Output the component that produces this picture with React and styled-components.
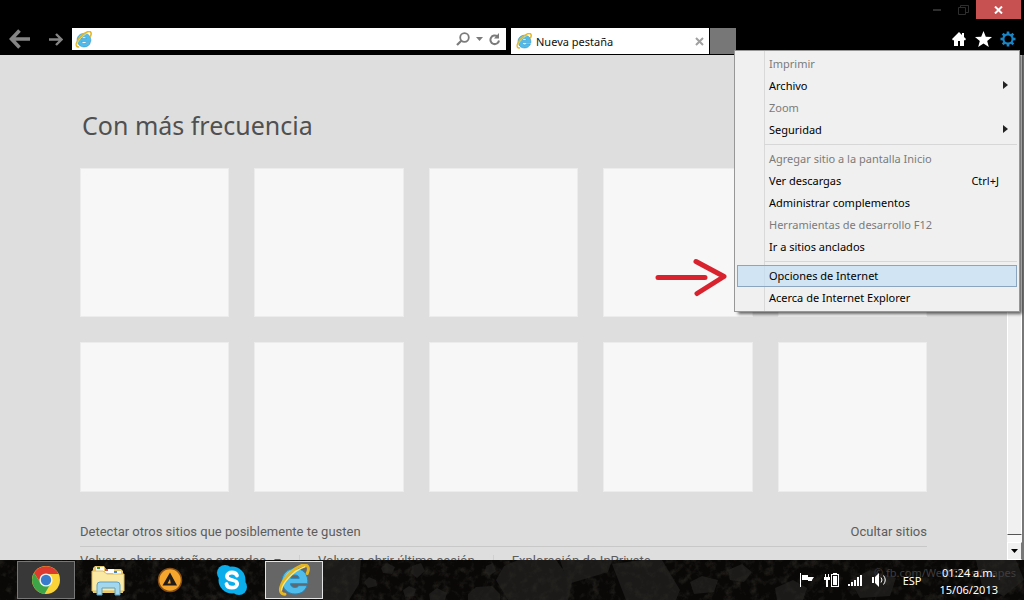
import React from 'react';
import styled, { createGlobalStyle } from 'styled-components';

const GlobalStyle = createGlobalStyle`
  * {
    box-sizing: border-box;
  }

  body {
    margin: 0;
    background: #000;
    font-family: 'Noto Sans', 'Open Sans', sans-serif;
    font-size: 11px;
  }

  button {
    padding: 0;
    border: 0;
    background: none;
    font: inherit;
    color: inherit;
  }

  svg {
    display: block;
  }
`;

const Desktop = styled.div`
  position: relative;
  display: flex;
  flex-direction: column;
  height: 100vh;
  overflow: hidden;
`;

const TitleBar = styled.header`
  display: flex;
  flex: none;
  justify-content: flex-end;
  height: 28px;
  padding-right: 3px;
`;

const WindowButton = styled.button`
  display: flex;
  align-items: center;
  justify-content: center;
  width: ${props => (props.$close ? '45px' : '26px')};
  height: 19px;
  background: ${props => (props.$close ? '#c75050' : 'transparent')};
  color: ${props => (props.$close ? '#fff' : '#2e2e2e')};
`;

const Toolbar = styled.div`
  display: grid;
  flex: none;
  grid-template-columns: 72px minmax(0, 434px) minmax(0, 1fr) auto;
  height: 27px;
`;

const NavButtons = styled.nav`
  display: flex;
  align-items: center;
  justify-content: space-between;
  height: 22px;
  padding: 0 9px;
  color: #858585;
`;

const AddressBar = styled.form`
  display: flex;
  align-items: center;
  gap: 6px;
  height: 22px;
  padding: 0 5px 0 3px;
  background: #fff;
  color: #7b7b7b;

  input {
    flex: 1;
    min-width: 0;
    border: 0;
    outline: 0;
    font: inherit;
  }
`;

const Tabs = styled.div`
  display: flex;
  gap: 1px;
  padding-left: 5px;
  height: 26px;
`;

const Tab = styled.div`
  display: flex;
  align-items: center;
  gap: 4px;
  flex: 0 1 198px;
  min-width: 0;
  padding: 0 5px;
  background: #fff;
  color: #111;

  span {
    flex: 1;
    white-space: nowrap;
  }
`;

const NewTab = styled.button`
  flex: 0 0 26px;
  background: #777;
`;

const Tools = styled.div`
  display: flex;
  align-items: center;
  gap: 8px;
  height: 22px;
  padding-right: 8px;
`;

const Viewport = styled.div`
  display: flex;
  flex: 1;
  min-height: 0;
  background: #dedede;
`;

const Page = styled.main`
  flex: 1;
  min-width: 0;
  padding: 52px 80px 0;
  overflow: hidden;
  color: #505050;
`;

const PageInner = styled.div`
  max-width: 847px;
`;

const Heading = styled.h1`
  margin: 0 0 25px 2px;
  font-size: 25px;
  font-weight: 400;
  line-height: 36px;
`;

const TileGrid = styled.div`
  display: grid;
  grid-template-columns: repeat(5, 1fr);
  gap: 25px;
`;

const Tile = styled.a`
  aspect-ratio: 1;
  border: 1px solid #ececec;
  background: #f7f7f7;
`;

const LinkRow = styled.div`
  display: flex;
  align-items: center;
  justify-content: ${props => (props.$spread ? 'space-between' : 'flex-start')};
  gap: 18px;
  padding-top: ${props => (props.$spread ? '30px' : '4px')};
  border-top: ${props => (props.$spread ? '0' : '1px solid #c8c8c8')};
  margin-bottom: 4px;
  white-space: nowrap;
`;

const PageLink = styled.a`
  display: flex;
  align-items: center;
  gap: 8px;
  color: #5c5c5c;
  font-family: Roboto, 'Noto Sans', sans-serif;
  font-size: 13px;
  line-height: 20px;
  text-decoration: none;
`;

const Divider = styled.span`
  width: 1px;
  height: 12px;
  background: #cfcfcf;
`;

const ScrollBar = styled.div`
  display: flex;
  flex-direction: column;
  flex: none;
  gap: 7px;
  width: 17px;
  border-right: 2px solid #777;
  background: #f8f8f8;
`;

const ScrollThumb = styled.div`
  flex: 1;
  border: 1px solid #fff;
  border-bottom-color: #555;
  background: #f0f0f0;
`;

const ScrollButton = styled.button`
  display: flex;
  align-items: center;
  justify-content: center;
  height: 18px;
  border: 1px solid #fff;
  border-right-color: #777;
  background: #f0f0f0;
`;

const Menu = styled.div`
  position: absolute;
  top: 50px;
  right: 4px;
  width: 286px;
  padding: 2px;
  border: 1px solid #979797;
  background: linear-gradient(90deg, #f0f0f0 29px, #d9d9d9 29px, #d9d9d9 30px, #f0f0f0 30px);
  box-shadow: 3px 3px 3px -1px rgba(0, 0, 0, 0.6);
`;

const MenuItem = styled.button`
  display: flex;
  align-items: center;
  justify-content: space-between;
  width: 100%;
  height: 22px;
  padding: 0 8px 2px 31px;
  border: 1px solid ${props => (props.$active ? '#8ba5bf' : 'transparent')};
  background: ${props => (props.$active ? 'rgba(190, 221, 245, 0.65)' : 'transparent')};
  color: #000;
  text-align: left;
  white-space: nowrap;

  &:disabled {
    color: #7b7b7b;
  }

  kbd {
    padding-right: 9px;
    font: inherit;
  }
`;

const MenuSeparator = styled.hr`
  height: 1px;
  margin: 3px 0 3px 27px;
  border: 0;
  background: #d7d7d7;
`;

const Pointer = styled.svg`
  position: absolute;
  top: 258px;
  right: 296px;
`;

const TaskBar = styled.footer`
  position: relative;
  display: flex;
  flex: none;
  align-items: center;
  justify-content: space-between;
  height: 40px;
  padding: 0 26px 0 17px;
  overflow: hidden;
  background: #0a0807;
  color: #fff;
`;

const Wallpaper = styled.svg`
  position: absolute;
  inset: 0;
  width: 100%;
  height: 100%;
`;

const TaskList = styled.div`
  position: relative;
  display: flex;
  gap: 4px;
`;

const Task = styled.button`
  display: flex;
  align-items: center;
  justify-content: center;
  width: 58px;
  height: 38px;
  border: 1px solid
    ${props => ({ active: '#e4e4e4', open: '#777' }[props.$state] || 'transparent')};
  background: ${props =>
    ({ active: '#666', open: '#383838' }[props.$state] || 'transparent')};
`;

const Tray = styled.div`
  position: relative;
  display: flex;
  align-items: center;
  gap: 8px;
`;

const Language = styled.span`
  margin-left: 7px;
`;

const Clock = styled.time`
  margin-left: 10px;
  padding-top: 2px;
  line-height: 17px;
  text-align: center;
`;

const Watermark = styled.span`
  position: absolute;
  right: 8px;
  top: 4px;
  color: #3e3e3e;
  line-height: 18px;
`;

const ExplorerLogo = ({ size }) => (
  <svg width={size} height={size} viewBox="0 0 32 32" fill="none">
    <path
      d="M17 4.500C9.500 4.500 4 9.800 4 17S9.500 30 17 30c6 0 10.400-3 12-8.400h-8.200c-.7 1.300-2 1.900-3.800 1.900-2.600 0-4.200-1.300-4.500-3.800h17.300C30.500 10.500 25.500 4.500 17 4.500zm-4.300 9.800c.5-2.100 2-3.300 4.300-3.300s3.900 1.200 4.200 3.300z"
      fill="#4fbcec"
      stroke="#2387bd"
      strokeWidth="1"
    />
    <path d="M8 12c2-3.500 6-5.500 10-5" stroke="#a8e2fa" strokeWidth="1.500" />
    <path
      d="M7 30.200C-1.500 30 3 18 11 10S28-1.500 30 3c.8 1.800.4 4-.8 6.500"
      stroke="#e3b626"
      strokeWidth="3"
      strokeLinecap="round"
    />
    <path d="M3.500 26.500C4 20 14 7 27.500 2.500" stroke="#ffe570" strokeWidth="1.400" />
  </svg>
);

const ChromeLogo = () => (
  <svg width="30" height="30" viewBox="0 0 30 30">
    <circle cx="15" cy="15" r="14" fill="#f9d338" />
    <path d="M3 8A14 14 0 0 1 27.600 9H15a6.200 6.200 0 0 0-6 8z" fill="#dd3b32" />
    <path d="M3 8a14 14 0 0 0 10.500 21l6.200-10.500A6.200 6.200 0 0 1 9.500 18z" fill="#3da547" />
    <circle cx="15" cy="15" r="6.600" fill="#f3f3f3" />
    <circle cx="15" cy="15" r="5.200" fill="#397ccb" />
  </svg>
);

const FolderLogo = () => (
  <svg width="34" height="32" viewBox="0 0 34 32">
    <path d="M2 4l2-2h9l2 3h15l2 2v22H2z" fill="#e8c868" />
    <path d="M5 3h8v4H5z" fill="#fff" />
    <path d="M6 3h3v2H6z" fill="#3aa545" />
    <path d="M14 5h9v4h-9z" fill="#fff" />
    <path d="M14 5h3v2h-3z" fill="#dc5040" />
    <path d="M22 7h8v4h-8z" fill="#fff" />
    <path d="M23 7h3v2h-3z" fill="#4587ca" />
    <path d="M1 7h11l4 3h17v17H1z" fill="#f9e9a4" stroke="#ddbd63" />
    <path
      d="M6 31V21q0-3 3-3h17q3 0 3 3v10h-5v-7H11v7z"
      fill="#a3d7ee"
      stroke="#5c9ec4"
    />
  </svg>
);

const AimpLogo = () => (
  <svg width="26" height="26" viewBox="0 0 26 26">
    <circle cx="13" cy="13" r="11.500" fill="#f6a52d" stroke="#865018" strokeWidth="1.500" />
    <path
      d="M13 5.500l7 13H5.500zM13 12l-2.500 4.500h3.200z"
      fill="#231c16"
      fillRule="evenodd"
    />
  </svg>
);

const SkypeLogo = () => (
  <svg width="32" height="32" viewBox="0 0 32 32">
    <circle cx="16" cy="16" r="13.500" fill="#0badea" />
    <circle cx="9" cy="9" r="8" fill="#0badea" />
    <circle cx="23" cy="23" r="8" fill="#0badea" />
    <path
      d="M21 11.500c-.8-2-2.500-3-5-3-2.800 0-5 1.300-5 3.700 0 5.300 10.200 2.300 10.200 7.500 0 2.500-2.200 4-5.200 4-2.900 0-5-1.400-5.500-3.700"
      fill="none"
      stroke="#fff"
      strokeWidth="3.800"
      strokeLinecap="round"
    />
  </svg>
);

const GearIcon = () => (
  <svg width="16" height="16" viewBox="0 0 16 16" fill="none" stroke="#1a84c4">
    <circle cx="8" cy="8" r="4.600" strokeWidth="2.200" />
    {[0, 45, 90, 135, 180, 225, 270, 315].map(angle => (
      <path key={angle} d="M8 3V.5" strokeWidth="2.600" transform={`rotate(${angle} 8 8)`} />
    ))}
  </svg>
);

const CaretDown = ({ color = 'currentColor' }) => (
  <svg width="7" height="4" viewBox="0 0 7 4">
    <path d="M0 0h7L3.500 4z" fill={color} />
  </svg>
);

const menuItems = [
  { label: 'Imprimir', disabled: true },
  { label: 'Archivo', submenu: true },
  { label: 'Zoom', disabled: true },
  { label: 'Seguridad', submenu: true },
  null,
  { label: 'Agregar sitio a la pantalla Inicio', disabled: true },
  { label: 'Ver descargas', shortcut: 'Ctrl+J' },
  { label: 'Administrar complementos' },
  { label: 'Herramientas de desarrollo F12', disabled: true },
  { label: 'Ir a sitios anclados' },
  null,
  { label: 'Opciones de Internet', active: true },
  { label: 'Acerca de Internet Explorer' }
];

const tasks = [
  { name: 'Google Chrome', state: 'open', icon: <ChromeLogo /> },
  { name: 'Explorador de archivos', icon: <FolderLogo /> },
  { name: 'AIMP', icon: <AimpLogo /> },
  { name: 'Skype', icon: <SkypeLogo /> },
  { name: 'Internet Explorer', state: 'active', icon: <ExplorerLogo size={32} /> }
];

const stones = [
  'M323 0h38l-2 24-10 16h-26z',
  'M364 22l5-5 7 3 1 6-9 2z',
  'M381 8l6-5 8 4-3 7-9-1z',
  'M403 30l6-4 7 3-2 7-9 1z',
  'M412 6l9-3 4 8-8 7-6-5z',
  'M429 34l8-6 10 5-2 7h-15z',
  'M468 34l8-7 16-1 8 8v6h-32z',
  'M486 6l7-3 3 8-7 5-4-4z',
  'M496 20l8-14 14-6h38l16 22-4 18h-60z',
  'M560 0h52l-4 12-40 12z',
  'M612 4l30-4h20l18 30-4 10h-50z',
  'M690 22l12-6 16 4-4 12-20 2z',
  'M728 10l14-6 10 8-8 10-14-2z',
  'M775 28l18-8 14 8-4 12h-26z',
  'M850 20l20-10 26 8-6 18-30 2z',
  'M976 0h40l8 20-20 16-22-10z'
];

const ToolsMenu = () => (
  <Menu role="menu">
    {menuItems.map((item, index) =>
      item ? (
        <MenuItem
          key={item.label}
          role="menuitem"
          disabled={item.disabled}
          $active={item.active}
        >
          {item.label}
          {item.shortcut && <kbd>{item.shortcut}</kbd>}
          {item.submenu && (
            <svg width="5" height="8" viewBox="0 0 5 8">
              <path d="M0 0l5 4-5 4z" fill="#222" />
            </svg>
          )}
        </MenuItem>
      ) : (
        <MenuSeparator key={index} />
      )
    )}
  </Menu>
);

const BrowserBar = () => (
  <>
    <TitleBar>
      <WindowButton aria-label="Minimizar">
        <svg width="8" height="2" viewBox="0 0 8 2">
          <path d="M0 0h8v2H0z" fill="currentColor" />
        </svg>
      </WindowButton>
      <WindowButton aria-label="Restaurar">
        <svg width="11" height="10" viewBox="0 0 11 10" fill="none" stroke="currentColor">
          <path d="M.5 2.500h7v7h-7zM2.500 2.500v-2h8v7h-3" />
        </svg>
      </WindowButton>
      <WindowButton $close aria-label="Cerrar">
        <svg width="9" height="8" viewBox="0 0 9 8" stroke="currentColor" strokeWidth="2">
          <path d="M1 .5l7 7M8 .5l-7 7" />
        </svg>
      </WindowButton>
    </TitleBar>
    <Toolbar>
      <NavButtons>
        <button aria-label="Atrás">
          <svg width="22" height="20" viewBox="0 0 22 20" fill="none" stroke="currentColor">
            <path d="M21 10H3M10.500 1.500L2.500 10l8 8.500" strokeWidth="3.600" />
          </svg>
        </button>
        <button aria-label="Adelante">
          <svg width="14" height="13" viewBox="0 0 14 13" fill="none" stroke="currentColor">
            <path d="M0 6.500h12M7 1l5.500 5.500L7 12" strokeWidth="2.400" />
          </svg>
        </button>
      </NavButtons>
      <AddressBar>
        <ExplorerLogo size={17} />
        <input type="text" aria-label="Dirección" />
        <button type="button" aria-label="Buscar">
          <svg width="14" height="14" viewBox="0 0 14 14" fill="none" stroke="currentColor">
            <circle cx="8.500" cy="5.500" r="4.300" strokeWidth="1.800" />
            <path d="M5.300 8.700L1 13" strokeWidth="2.200" />
          </svg>
        </button>
        <button type="button" aria-label="Autocompletar">
          <CaretDown />
        </button>
        <button type="button" aria-label="Actualizar">
          <svg width="12" height="13" viewBox="0 0 12 13" fill="none" stroke="currentColor">
            <path d="M8.500 3.500A4.300 4.300 0 1 0 10 7.500" strokeWidth="2" />
            <path d="M10 0v5.500H5z" fill="currentColor" stroke="none" />
          </svg>
        </button>
      </AddressBar>
      <Tabs>
        <Tab>
          <ExplorerLogo size={16} />
          <span>Nueva pestaña</span>
          <button aria-label="Cerrar pestaña">
            <svg width="9" height="9" viewBox="0 0 9 9" stroke="#a0a0a0" strokeWidth="2">
              <path d="M1 1l7 7M8 1L1 8" />
            </svg>
          </button>
        </Tab>
        <NewTab aria-label="Nueva pestaña" />
      </Tabs>
      <Tools>
        <button aria-label="Inicio">
          <svg width="16" height="14" viewBox="0 0 16 14">
            <path d="M8 0L1 7l1 1.500L3 8v6h4V9h2v5h4V8l1 .5L15 7l-2-2V1h-2v2z" fill="#fff" />
          </svg>
        </button>
        <button aria-label="Favoritos">
          <svg width="17" height="16" viewBox="0 0 17 16">
            <path
              d="M8.500 0l2.300 5.700 6.200.4-4.800 3.800 1.600 6.100-5.300-3.400L3.200 16l1.600-6.100L0 6.100l6.200-.4z"
              fill="#fff"
            />
          </svg>
        </button>
        <button aria-label="Herramientas">
          <GearIcon />
        </button>
      </Tools>
    </Toolbar>
  </>
);

const SystemTray = () => (
  <Tray>
    <svg width="16" height="16" viewBox="0 0 16 16" fill="#fff">
      <path d="M0 1h1v14H0zM2 3h6v2h6l-2 3v1H8V8H2z" />
    </svg>
    <svg width="16" height="16" viewBox="0 0 16 16" fill="#fff">
      <path
        d="M7 2h2V1h4v1h2v13H7zm1 1v11h6V3zM9 4h4v9H9zM1 2h1v3h2V2h1v3h1v3H4v7H2V8H0V5h1z"
        fillRule="evenodd"
      />
    </svg>
    <svg width="16" height="12" viewBox="0 0 16 12" fill="#fff">
      <path d="M0 10h2v2H0zM3 8h2v4H3zM6 6h2v6H6zM9 3h2v9H9zM12 1h2v11h-2z" />
    </svg>
    <svg width="16" height="14" viewBox="0 0 16 14" fill="none" stroke="#fff">
      <path d="M0 4h2v6H0zM3 4l4-4v14l-4-4z" fill="#fff" stroke="none" />
      <path d="M9 4.500q2 2.500 0 5M11.500 2.500q3.500 4.500 0 9" />
    </svg>
    <Language>ESP</Language>
    <Clock>
      01:24 a.m.
      <br />
      15/06/2013
    </Clock>
  </Tray>
);

const App = () => (
  <>
    <GlobalStyle />
    <Desktop>
      <BrowserBar />
      <Viewport>
        <Page>
          <PageInner>
            <Heading>Con más frecuencia</Heading>
            <TileGrid>
              {Array.from({ length: 10 }, (_, index) => (
                <Tile key={index} href="#" aria-label={`Sitio ${index + 1}`} />
              ))}
            </TileGrid>
            <LinkRow $spread>
              <PageLink href="#">Detectar otros sitios que posiblemente te gusten</PageLink>
              <PageLink href="#">Ocultar sitios</PageLink>
            </LinkRow>
            <LinkRow>
              <PageLink href="#">
                Volver a abrir pestañas cerradas
                <CaretDown />
              </PageLink>
              <Divider />
              <PageLink href="#">Volver a abrir última sesión</PageLink>
              <Divider />
              <PageLink href="#">Exploración de InPrivate</PageLink>
            </LinkRow>
          </PageInner>
        </Page>
        <ScrollBar>
          <ScrollThumb />
          <ScrollButton aria-label="Bajar">
            <CaretDown color="#000" />
          </ScrollButton>
        </ScrollBar>
      </Viewport>
      <TaskBar>
        <Wallpaper viewBox="0 0 1024 40" preserveAspectRatio="none">
          <filter
            id="grain"
            x="0"
            y="0"
            width="100%"
            height="100%"
            colorInterpolationFilters="sRGB"
          >
            <feTurbulence type="fractalNoise" baseFrequency="0.12" numOctaves="4" seed="4" />
            <feColorMatrix values="0 0 0 0 .16  0 0 0 0 .15  0 0 0 0 .13  2 0 0 0 -.95" />
          </filter>
          {stones.map(d => (
            <path key={d} d={d} fill="#1b1a19" />
          ))}
          <rect width="1024" height="40" filter="url(#grain)" />
        </Wallpaper>
        <Watermark>© fb.com/WestCoastScapes</Watermark>
        <TaskList>
          {tasks.map(task => (
            <Task key={task.name} aria-label={task.name} $state={task.state}>
              {task.icon}
            </Task>
          ))}
        </TaskList>
        <SystemTray />
      </TaskBar>
      <ToolsMenu />
      <Pointer width="74" height="40" viewBox="0 0 74 40" fill="none">
        <path
          d="M4 19.500h47M42 3.500l28 15L43 35.500"
          stroke="#d8222e"
          strokeWidth="5"
          strokeLinecap="round"
          strokeLinejoin="round"
        />
      </Pointer>
    </Desktop>
  </>
);

export default App;
